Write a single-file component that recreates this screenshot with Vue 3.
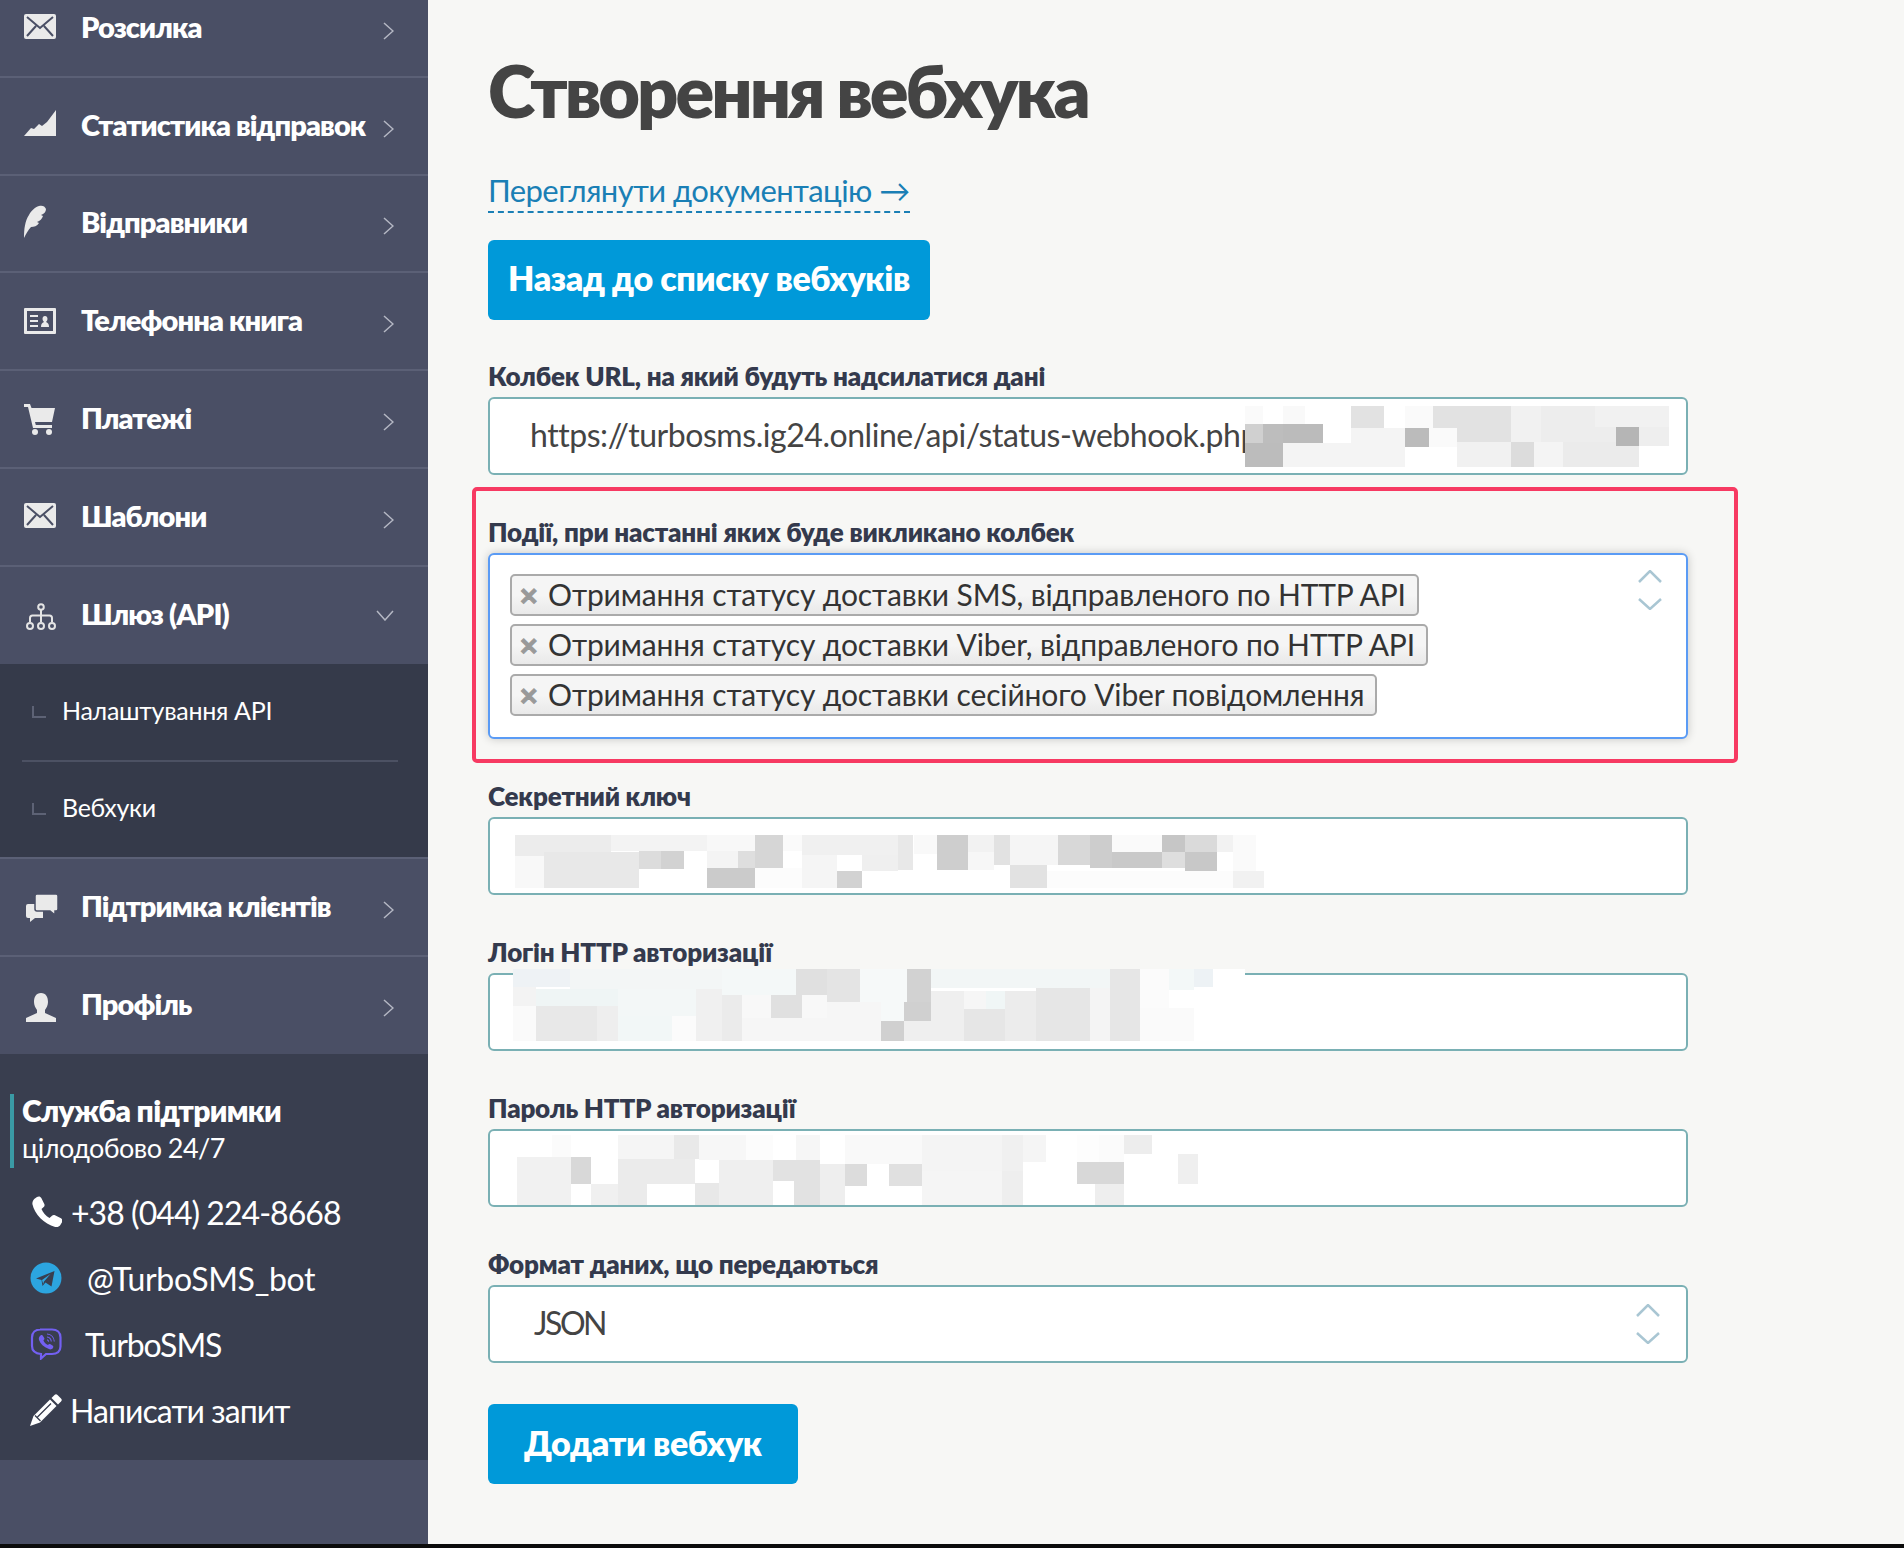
<template>
  <div class="page">
    <div class="layout">
      <aside class="sidebar">
        <nav class="menu">
          <template v-for="item in menuItems" :key="item.title">
            <div class="menu-row" :class="{ 'no-line': item.noLine }">
              <svg class="menu-icon" viewBox="0 0 36 36">
                <path v-for="(layer, i) in item.icon" :key="i" :class="layer[0]" :d="layer[1]" />
              </svg>
              <span class="menu-title">{{ item.title }}</span>
              <svg v-if="item.children" class="chevron-down" viewBox="0 0 18 11">
                <path d="M1 1l8 9 8-9" />
              </svg>
              <svg v-else class="chevron-right" viewBox="0 0 11 18">
                <path d="M1 1l9 8-9 8" />
              </svg>
            </div>
            <div v-if="item.children" class="submenu">
              <div v-for="child in item.children" :key="child" class="submenu-row">
                <svg class="corner" viewBox="0 0 14 12"><path d="M1 0v11h13" /></svg>
                <span>{{ child }}</span>
              </div>
            </div>
          </template>
        </nav>

        <div class="support">
          <div class="support-head">
            <strong>Служба підтримки</strong>
            <span>цілодобово 24/7</span>
          </div>
          <div class="contact">
            <svg class="contact-icon" viewBox="0 0 32 32">
              <path
                fill="#fff"
                d="M7 1c1.500-1 3.500-.8 4.300 1l3 6c.5 1.200.3 2.200-.6 3l-2.200 2c1.300 3.300 4.300 6.800 8 9l2.500-2.300c1-.8 2-.9 3-.4l6 3c1.600 1 2 2.300 1.200 3.700l-2 3.200c-1 1.500-3 2.200-5 1.700C14 28 4.500 18 2.500 8.500 2 6.500 3 4.500 4.200 3z"
              />
            </svg>
            <span class="phone-text">+38 (044) 224-8668</span>
          </div>
          <div class="contact">
            <svg class="contact-icon" viewBox="0 0 32 32">
              <circle cx="16" cy="16" r="15.500" fill="#2ca5e0" />
              <path fill="#393e4f" d="M6 16.500L24.500 9l-3 15.500-6-4-3 3.500-1-6z" />
              <path fill="#2ca5e0" d="M12 18l8.500-6-6.500 7.500-.8 2.500z" />
            </svg>
            <span class="bot-text">@TurboSMS_bot</span>
          </div>
          <div class="contact">
            <svg class="contact-icon" viewBox="0 0 32 32">
              <path
                fill="none"
                stroke="#7360f2"
                stroke-width="2.200"
                d="M10 1.500h12c5 0 8.500 3 8.500 8v9c0 5-3.500 7.500-8.500 7.500h-6l-5 4.500V26c-5-.5-9-3-9-8V9.500c0-5 3.500-8 8.500-8z"
              />
              <path
                fill="#7360f2"
                d="M10.500 7.500c1-.8 2-.5 2.500.5l1.200 2c.5 1 .2 1.700-.8 2.400 1 2 2.500 3.600 4.600 4.600.7-1 1.500-1.300 2.500-.8l2 1.300c1 .7 1.100 1.500.4 2.500-1 1.500-2.500 1.800-4 1.100C13.500 19 10.500 16 9 12c-.5-1.800 0-3.400 1.500-4.500z"
              />
              <path fill="none" stroke="#7360f2" stroke-width="1.100" d="M17 6c4 .3 7 3.300 7.300 7.500M17 9c2.500.2 4 1.800 4.300 4.500M17 11.800c1 .1 1.500.8 1.600 1.800" />
            </svg>
            <span class="viber-text">TurboSMS</span>
          </div>
          <div class="contact">
            <svg class="contact-icon" viewBox="0 0 32 32">
              <path fill="#fff" d="M24.500 1c1-1 2-1 3 0l3.500 3.500c1 1 1 2 0 3l-3 3L21.500 4z" />
              <path fill="#fff" d="M20 5.500l6.500 6.500L10 28.500 0 32l3.500-10z" />
              <path fill="none" stroke="#393e4f" stroke-width="1.300" d="M21 9.500L7.500 23M5 21.500l5.500 5.500" />
            </svg>
            <span class="write-text">Написати запит</span>
          </div>
        </div>
      </aside>

      <main class="content">
        <h1>Створення вебхука</h1>
        <a class="doc-link">Переглянути документацію →</a>
        <button class="blue-button back-button">Назад до списку вебхуків</button>

        <div class="field url-field">
          <label>Колбек URL, на який будуть надсилатися дані</label>
          <div class="input">
            <span class="input-text">https://turbosms.ig24.online/api/status-webhook.php</span>
            <div class="mosaic">
              <i v-for="(box, i) in urlMosaic" :key="i" :style="box"></i>
            </div>
          </div>
        </div>

        <div class="highlight">
          <label>Події, при настанні яких буде викликано колбек</label>
          <div class="multi-select">
            <span v-for="chip in events" :key="chip" class="chip">
              <b>×</b>{{ chip }}
            </span>
            <svg class="updown" viewBox="0 0 24 40">
              <path d="M1 12L12 1l11 11M1 29l11 10 11-10" />
            </svg>
          </div>
        </div>

        <div v-for="field in hiddenFields" :key="field.label" class="field">
          <label>{{ field.label }}</label>
          <div class="input">
            <div class="mosaic">
              <i v-for="(box, i) in field.boxes" :key="i" :style="box"></i>
            </div>
          </div>
        </div>

        <div class="field format-field">
          <label>Формат даних, що передаються</label>
          <div class="input select">
            <span class="json-text">JSON</span>
            <svg class="updown" viewBox="0 0 24 40">
              <path d="M1 12L12 1l11 11M1 29l11 10 11-10" />
            </svg>
          </div>
        </div>

        <button class="blue-button add-button">Додати вебхук</button>
      </main>
    </div>
    <div class="bottom-strip"></div>
  </div>
</template>

<script setup>
// menu icons: [class, path], drawn in a 36x36 box
const circle = (cx, cy, r) =>
  `M${cx - r} ${cy}a${r} ${r} 0 1 0 ${2 * r} 0a${r} ${r} 0 1 0 ${-2 * r} 0z`;

const envelope = [
  ["light", "M4 4h28a2 2 0 0 1 2 2v21a2 2 0 0 1-2 2H4a2 2 0 0 1-2-2V6a2 2 0 0 1 2-2z"],
  ["cut", "M5 7l13 11L31 7M5 26l9-10M31 26l-9-10"],
];

const menuItems = [
  { title: "Розсилка", icon: envelope },
  { title: "Статистика відправок", icon: [["light", "M2 28l7-8 3 1 5-5 3 2 5-4 9-12v26z"]] },
  {
    title: "Відправники",
    icon: [["light", "M2 33c0-9 1-17 5-23 2-4 6-8 10-9 3-1 6 0 7 3 0 3-2 5-5 6l2 1c-1 3-3 5-6 6l2 1c-2 3-5 4-8 4-3 3-5 7-7 11z"]],
  },
  {
    title: "Телефонна книга",
    icon: [
      ["light", "M3 5h30a1 1 0 0 1 1 1v24a1 1 0 0 1-1 1H3a1 1 0 0 1-1-1V6a1 1 0 0 1 1-1z"],
      ["dark", "M5 8h26v20H5z"],
      ["light", "M8 12h8v2H8zM8 17h8v2H8zM8 22h8v2H8zM19 24c0-3 1-4 3-5-1-1-1.500-2-1.500-3 0-2 1-3 2.500-3s2.500 1 2.500 3c0 1-.5 2-1.500 3 2 1 3 2 3 5z"],
    ],
  },
  {
    title: "Платежі",
    icon: [
      ["light", "M2 3h6l1.500 4H33l-3 14H13l.8 3H30v3H11L6 6H2z"],
      ["light", circle(13, 31, 3)],
      ["light", circle(27, 31, 3)],
    ],
  },
  { title: "Шаблони", icon: envelope },
  {
    title: "Шлюз (API)",
    noLine: true,
    children: ["Налаштування API", "Вебхуки"],
    icon: [
      ["line", circle(19, 10, 2.8)],
      ["line", "M19 13v12M8 25v-4c0-1.500 1-2.500 2.500-2.500h17c1.500 0 2.500 1 2.500 2.500v4"],
      ["line", circle(8, 29, 3)],
      ["line", circle(19, 29, 3)],
      ["line", circle(30, 29, 3)],
    ],
  },
  {
    title: "Підтримка клієнтів",
    icon: [
      ["light", "M6 15h15v14H13l-5 4v-4H6a2 2 0 0 1-2-2V17a2 2 0 0 1 2-2z"],
      ["front", "M15 5h19a2 2 0 0 1 2 2v13a2 2 0 0 1-2 2h-1v4l-5-4H15a2 2 0 0 1-2-2V7a2 2 0 0 1 2-2z"],
    ],
  },
  {
    title: "Профіль",
    noLine: true,
    icon: [
      ["light", "M19 6c5 0 7 4 7 9 0 3-1.500 6-3 8v3l11 5v4H4v-4l11-5v-3c-1.500-2-3-5-3-8 0-5 2-9 7-9z"],
    ],
  },
];

const events = [
  "Отримання статусу доставки SMS, відправленого по HTTP API",
  "Отримання статусу доставки Viber, відправленого по HTTP API",
  "Отримання статусу доставки сесійного Viber повідомлення",
];

// pixelated (censored) values: [x1, x2, y1, y2, colour] measured on crops of the screen
const toBoxes = (rows, ox, oy, sx, left, top) =>
  rows.map(([x1, x2, y1, y2, c]) => ({
    left: ox + x1 / sx - left + "px",
    top: oy + y1 / 3 - top + "px",
    width: (x2 - x1) / sx + "px",
    height: (y2 - y1) / 3 + "px",
    background: c,
  }));

const urlMosaic = toBoxes(
  [
    [182, 1368, 78, 261, "#fff"],
    [182, 232, 78, 132, "#fafafa"],
    [288, 350, 78, 132, "#f9f9f9"],
    [480, 570, 78, 143, "#e2e2e2"],
    [630, 708, 78, 143, "#fafafa"],
    [708, 927, 78, 143, "#e2e2e2"],
    [927, 1011, 78, 186, "#f1f1f1"],
    [1011, 1162, 78, 186, "#ededed"],
    [1162, 1368, 78, 140, "#f1f1f1"],
    [182, 232, 132, 190, "#d0d0d0"],
    [232, 288, 132, 190, "#bdbdbd"],
    [288, 400, 132, 190, "#bbb"],
    [182, 288, 190, 261, "#bcbcbc"],
    [288, 630, 190, 261, "#f4f4f4"],
    [480, 630, 143, 190, "#f4f4f4"],
    [630, 697, 143, 200, "#bbb"],
    [697, 776, 143, 200, "#fafafa"],
    [776, 927, 143, 186, "#e2e2e2"],
    [776, 927, 186, 261, "#f1f1f1"],
    [927, 991, 186, 261, "#dcdcdc"],
    [991, 1072, 186, 261, "#f4f4f4"],
    [1072, 1285, 186, 261, "#ebebeb"],
    [1162, 1221, 140, 186, "#ededed"],
    [1221, 1285, 140, 198, "#b5b5b5"],
    [1285, 1368, 140, 198, "#eee"],
  ],
  1180, 380, 2.8, 488, 397
);

const hiddenFields = [
  {
    label: "Секретний ключ",
    boxes: toBoxes(
      [
        [96, 263, 165, 228, "#ececec"],
        [263, 430, 165, 213, "#f3f3f3"],
        [430, 514, 165, 213, "#f8f8f8"],
        [514, 563, 165, 264, "#d6d6d6"],
        [563, 596, 165, 213, "#fafafa"],
        [596, 763, 165, 225, "#f0f0f0"],
        [763, 790, 165, 270, "#e8e8e8"],
        [790, 831, 165, 222, "#f9f9f9"],
        [831, 885, 165, 270, "#cecece"],
        [885, 930, 165, 216, "#f2f2f2"],
        [930, 958, 165, 255, "#e2e2e2"],
        [958, 1042, 165, 255, "#f5f5f5"],
        [1042, 1098, 165, 255, "#d8d8d8"],
        [1098, 1136, 165, 264, "#cdcdcd"],
        [1136, 1223, 165, 216, "#fafafa"],
        [1136, 1223, 216, 264, "#c9c9c9"],
        [1223, 1263, 165, 216, "#c6c6c6"],
        [1223, 1263, 216, 264, "#dedede"],
        [1263, 1319, 165, 216, "#dadada"],
        [1263, 1319, 216, 273, "#c8c8c8"],
        [1319, 1347, 165, 216, "#f2f2f2"],
        [1347, 1387, 165, 273, "#fafafa"],
        [96, 146, 228, 324, "#f8f8f8"],
        [146, 312, 216, 324, "#e8e8e8"],
        [312, 350, 213, 267, "#dcdcdc"],
        [350, 390, 213, 267, "#d2d2d2"],
        [430, 484, 213, 264, "#f4f4f4"],
        [484, 514, 213, 264, "#dedede"],
        [430, 514, 264, 324, "#cbcbcb"],
        [514, 596, 264, 324, "#fcfcfc"],
        [596, 657, 225, 324, "#f5f5f5"],
        [657, 700, 273, 324, "#d2d2d2"],
        [700, 763, 225, 273, "#efefef"],
        [885, 930, 216, 270, "#f7f7f7"],
        [958, 1023, 255, 324, "#e2e2e2"],
        [1023, 1347, 273, 324, "#fcfcfc"],
        [1347, 1401, 273, 324, "#f1f1f1"],
      ],
      460, 780, 1.742, 488, 817
    ),
  },
  {
    label: "Логін HTTP авторизації",
    boxes: toBoxes(
      [
        [92, 1368, 567, 783, "#fff"],
        [92, 192, 567, 622, "#eef2f5"],
        [192, 456, 567, 627, "#f3f6f6"],
        [456, 585, 567, 645, "#f4f8f8"],
        [585, 639, 567, 645, "#e0e0e0"],
        [639, 697, 567, 666, "#e4e4e4"],
        [697, 779, 567, 666, "#f6f9f9"],
        [779, 821, 567, 666, "#d2d2d2"],
        [821, 1132, 567, 624, "#f2f6f6"],
        [1132, 1185, 567, 783, "#e6e6e6"],
        [1185, 1235, 567, 684, "#fbfbfb"],
        [1235, 1279, 567, 630, "#f3f8f8"],
        [1279, 1312, 567, 621, "#edf2f5"],
        [92, 132, 622, 678, "#f3f3f3"],
        [132, 275, 627, 678, "#eff5f5"],
        [275, 411, 627, 708, "#f3f7f7"],
        [411, 456, 627, 783, "#f0f0f0"],
        [456, 491, 645, 783, "#ebebeb"],
        [491, 542, 645, 714, "#f8f8f8"],
        [542, 596, 645, 714, "#e0e0e0"],
        [596, 639, 645, 714, "#f8f8f8"],
        [639, 733, 666, 783, "#f6f6f6"],
        [491, 733, 714, 783, "#f6f6f6"],
        [733, 779, 666, 723, "#f6f9f9"],
        [774, 821, 666, 723, "#d0d0d0"],
        [733, 774, 723, 783, "#d0d0d0"],
        [774, 878, 723, 783, "#efefef"],
        [821, 878, 632, 723, "#efefef"],
        [878, 950, 687, 783, "#e6e6e6"],
        [878, 917, 632, 687, "#f6f6f6"],
        [917, 950, 632, 687, "#f0f6f6"],
        [950, 1004, 632, 783, "#ececec"],
        [1004, 1098, 624, 783, "#e6e6e6"],
        [1098, 1132, 624, 783, "#f4f4f4"],
        [1185, 1279, 684, 783, "#fafafa"],
        [92, 132, 678, 783, "#fafafa"],
        [132, 239, 678, 783, "#e8e8e8"],
        [239, 275, 678, 783, "#eee"],
        [275, 369, 708, 783, "#f2f7f7"],
        [369, 411, 708, 783, "#fbfbfb"],
      ],
      460, 780, 1.742, 488, 973
    ),
  },
  {
    label: "Пароль HTTP авторизації",
    boxes: toBoxes(
      [
        [160, 193, 1065, 1131, "#fbfbfb"],
        [275, 373, 1065, 1137, "#f5f5f5"],
        [373, 416, 1065, 1137, "#e9e9e9"],
        [416, 498, 1065, 1140, "#f7f7f7"],
        [498, 545, 1065, 1140, "#fcfcfc"],
        [585, 627, 1065, 1140, "#f6f6f6"],
        [671, 805, 1065, 1152, "#f9f9f9"],
        [805, 945, 1065, 1173, "#f4f4f4"],
        [945, 981, 1065, 1173, "#f0f0f0"],
        [981, 1021, 1065, 1146, "#f5f5f5"],
        [1075, 1114, 1065, 1146, "#fdfdfd"],
        [1114, 1157, 1065, 1146, "#fbfbfb"],
        [1157, 1206, 1065, 1122, "#ededed"],
        [99, 193, 1131, 1275, "#f1f1f1"],
        [193, 228, 1131, 1212, "#d8d8d8"],
        [275, 409, 1137, 1212, "#ebebeb"],
        [451, 545, 1140, 1275, "#efefef"],
        [545, 627, 1140, 1203, "#e2e2e2"],
        [582, 627, 1203, 1275, "#e2e2e2"],
        [627, 671, 1152, 1275, "#eee"],
        [671, 709, 1152, 1218, "#dcdcdc"],
        [747, 805, 1152, 1218, "#e0e0e0"],
        [805, 945, 1173, 1275, "#f5f5f5"],
        [945, 981, 1173, 1275, "#eee"],
        [1075, 1157, 1146, 1212, "#d8d8d8"],
        [1106, 1157, 1212, 1275, "#eee"],
        [1251, 1286, 1122, 1212, "#efefef"],
        [228, 275, 1212, 1275, "#f0f0f0"],
        [275, 326, 1212, 1275, "#ebebeb"],
        [409, 451, 1209, 1275, "#e8e8e8"],
      ],
      460, 780, 1.742, 488, 1129
    ),
  },
];
</script>

<style scoped>
.page {
  height: 1548px;
  display: flex;
  flex-direction: column;
  overflow: hidden;
  font-family: "Lato", "Open Sans", sans-serif;
}

.layout {
  flex: 1;
  display: flex;
  min-height: 0;
}

.bottom-strip {
  height: 4px;
  background: #0b0b0b;
}

/* Sidebar */
.sidebar {
  width: 428px;
  flex-shrink: 0;
  background: #4a4f65;
  color: #fff;
}

.menu {
  margin-top: -20px;
}

.menu-row {
  height: 97.75px;
  display: flex;
  align-items: center;
  padding: 0 34px 0 22px;
  border-bottom: 2px solid #5b6076;
  box-sizing: border-box;
}

.menu-row.no-line {
  height: 97.4px;
  border-bottom: none;
}

.menu-icon {
  width: 36px;
  height: 36px;
  margin-right: 23px;
  flex-shrink: 0;
  overflow: visible;
}

.menu-icon .light {
  fill: #eaeaea;
}

.menu-icon .dark {
  fill: #4a4f65;
}

.menu-icon .cut {
  fill: none;
  stroke: #4a4f65;
  stroke-width: 2;
}

.menu-icon .line {
  fill: none;
  stroke: #e4e4e4;
  stroke-width: 2;
}

.menu-icon .front {
  fill: #eaeaea;
  stroke: #4a4f65;
  stroke-width: 1.500;
}

.menu-title {
  font-size: 29px;
  font-weight: 800;
  letter-spacing: -0.9px;
  margin-top: -3px;
}

.chevron-right {
  width: 11px;
  height: 18px;
  margin-left: auto;
  margin-top: 6px;
  flex-shrink: 0;
}

.chevron-down {
  width: 18px;
  height: 11px;
  margin-left: auto;
  flex-shrink: 0;
}

.chevron-right path,
.chevron-down path {
  fill: none;
  stroke: #b5b8c4;
  stroke-width: 1.500;
}

.submenu {
  height: 195px;
  background: #353a4a;
  border-bottom: 2px solid #5b6076;
  box-sizing: border-box;
  padding: 0 30px 0 22px;
}

.submenu-row {
  height: 96px;
  display: flex;
  align-items: center;
  box-sizing: border-box;
  padding-bottom: 5px;
  font-size: 25px;
  letter-spacing: -0.3px;
}

.submenu-row:first-child {
  height: 98px;
  padding-bottom: 4px;
  border-bottom: 2px solid #4c5163;
}

.corner {
  width: 14px;
  height: 12px;
  margin: 4px 16px 0 10px;
  fill: none;
  stroke: #5d6275;
  stroke-width: 2;
}

.support {
  height: 406px;
  background: #393e4f;
  padding-top: 40px;
  box-sizing: border-box;
}

.support-head {
  margin-left: 10px;
  padding-left: 8px;
  height: 74px;
  border-left: 4px solid #3a9aa5;
  display: flex;
  flex-direction: column;
  margin-bottom: 11px;
}

.support-head strong {
  font-size: 30px;
  font-weight: 800;
  line-height: 36px;
  letter-spacing: -0.7px;
  margin-top: -2px;
}

.support-head span {
  font-size: 27px;
  line-height: 36px;
  letter-spacing: -0.55px;
  margin-top: 2px;
}

.contact {
  height: 66px;
  display: flex;
  align-items: center;
  padding-left: 30px;
  font-size: 32px;
  letter-spacing: -0.95px;
}

.contact-icon {
  width: 32px;
  height: 32px;
  flex-shrink: 0;
}

.phone-text {
  margin-left: 9px;
}

.bot-text {
  margin-left: 25px;
  letter-spacing: -0.35px;
}

.viber-text {
  margin-left: 23px;
  letter-spacing: -1.1px;
}

.write-text {
  margin-left: 8px;
}

/* Content */
.content {
  flex: 1;
  background: #f7f7f5;
  padding: 50px 0 0 60px;
  display: flex;
  flex-direction: column;
  align-items: flex-start;
  color: #343a4d;
}

h1 {
  margin: 0;
  font-size: 72px;
  line-height: 80px;
  font-weight: 800;
  color: #444;
  letter-spacing: -3px;
}

.doc-link {
  margin-top: 39px;
  font-size: 31px;
  line-height: 42px;
  color: #1a7fb5;
  border-bottom: 2px dashed #1a7fb5;
  letter-spacing: -0.56px;
}

.blue-button {
  border: none;
  border-radius: 6px;
  background: #0099d9;
  color: #fff;
  height: 80px;
  font-family: inherit;
  font-size: 34px;
  font-weight: 800;
  letter-spacing: -0.4px;
  padding: 0 20px 6px;
}

.back-button {
  margin-top: 27px;
}

.add-button {
  padding: 0 36px 4px;
  margin-top: 41px;
}

.field {
  margin-bottom: 41px;
}

.url-field {
  margin-top: 40px;
  margin-bottom: 12px;
}

.format-field {
  margin-bottom: 0;
}

label {
  display: block;
  font-size: 26px;
  line-height: 32px;
  font-weight: 800;
  margin-bottom: 5px;
  letter-spacing: -0.2px;
}

.input {
  width: 1200px;
  height: 78px;
  box-sizing: border-box;
  position: relative;
  background: #fff;
  border: 2px solid #7ab0b4;
  border-radius: 6px;
  display: flex;
  align-items: center;
  color: #444;
  font-size: 32px;
}

.input-text {
  margin: 0 0 3px 40px;
  white-space: nowrap;
  letter-spacing: -0.45px;
}

.json-text {
  margin: 0 0 3px 44px;
  letter-spacing: -2.5px;
}

.mosaic {
  position: absolute;
  inset: -2px;
  pointer-events: none;
}

.mosaic i {
  position: absolute;
  display: block;
}

.highlight {
  width: 1266px;
  height: 276px;
  box-sizing: border-box;
  margin: 0 0 17px -16px;
  padding: 25px 45px 0 12px;
  border: 4px solid #f73a62;
  border-radius: 5px;
}

.multi-select {
  width: 1200px;
  height: 186px;
  box-sizing: border-box;
  position: relative;
  background: #fff;
  border: 2px solid #5a9bf5;
  border-radius: 6px;
  box-shadow: 0 0 10px rgba(0, 0, 0, 0.2);
  padding: 19px 20px;
  display: flex;
  flex-direction: column;
  align-items: flex-start;
  gap: 8px;
}

.chip {
  height: 42px;
  box-sizing: border-box;
  padding: 0 11px 3px 10px;
  display: flex;
  align-items: center;
  border: 2px solid #aaa;
  border-radius: 5px;
  background: linear-gradient(#f5f5f5 50%, #e9e9e9);
  color: #333;
  font-size: 30px;
  letter-spacing: -0.13px;
  white-space: nowrap;
}

.chip b {
  color: #999;
  width: 28px;
  margin: 4px 0 0 -2px;
  font-family: "Liberation Sans", sans-serif;
  font-size: 30px;
  -webkit-text-stroke: 1px #999;
}

.updown {
  position: absolute;
  width: 24px;
  height: 40px;
  right: 24px;
  top: 15px;
  fill: none;
  stroke: #a9c6d3;
  stroke-width: 2.500;
}

.select .updown {
  right: 26px;
  top: 17px;
}
</style>

<style>
html,
body {
  margin: 0;
  background: #f7f7f5;
}
</style>
